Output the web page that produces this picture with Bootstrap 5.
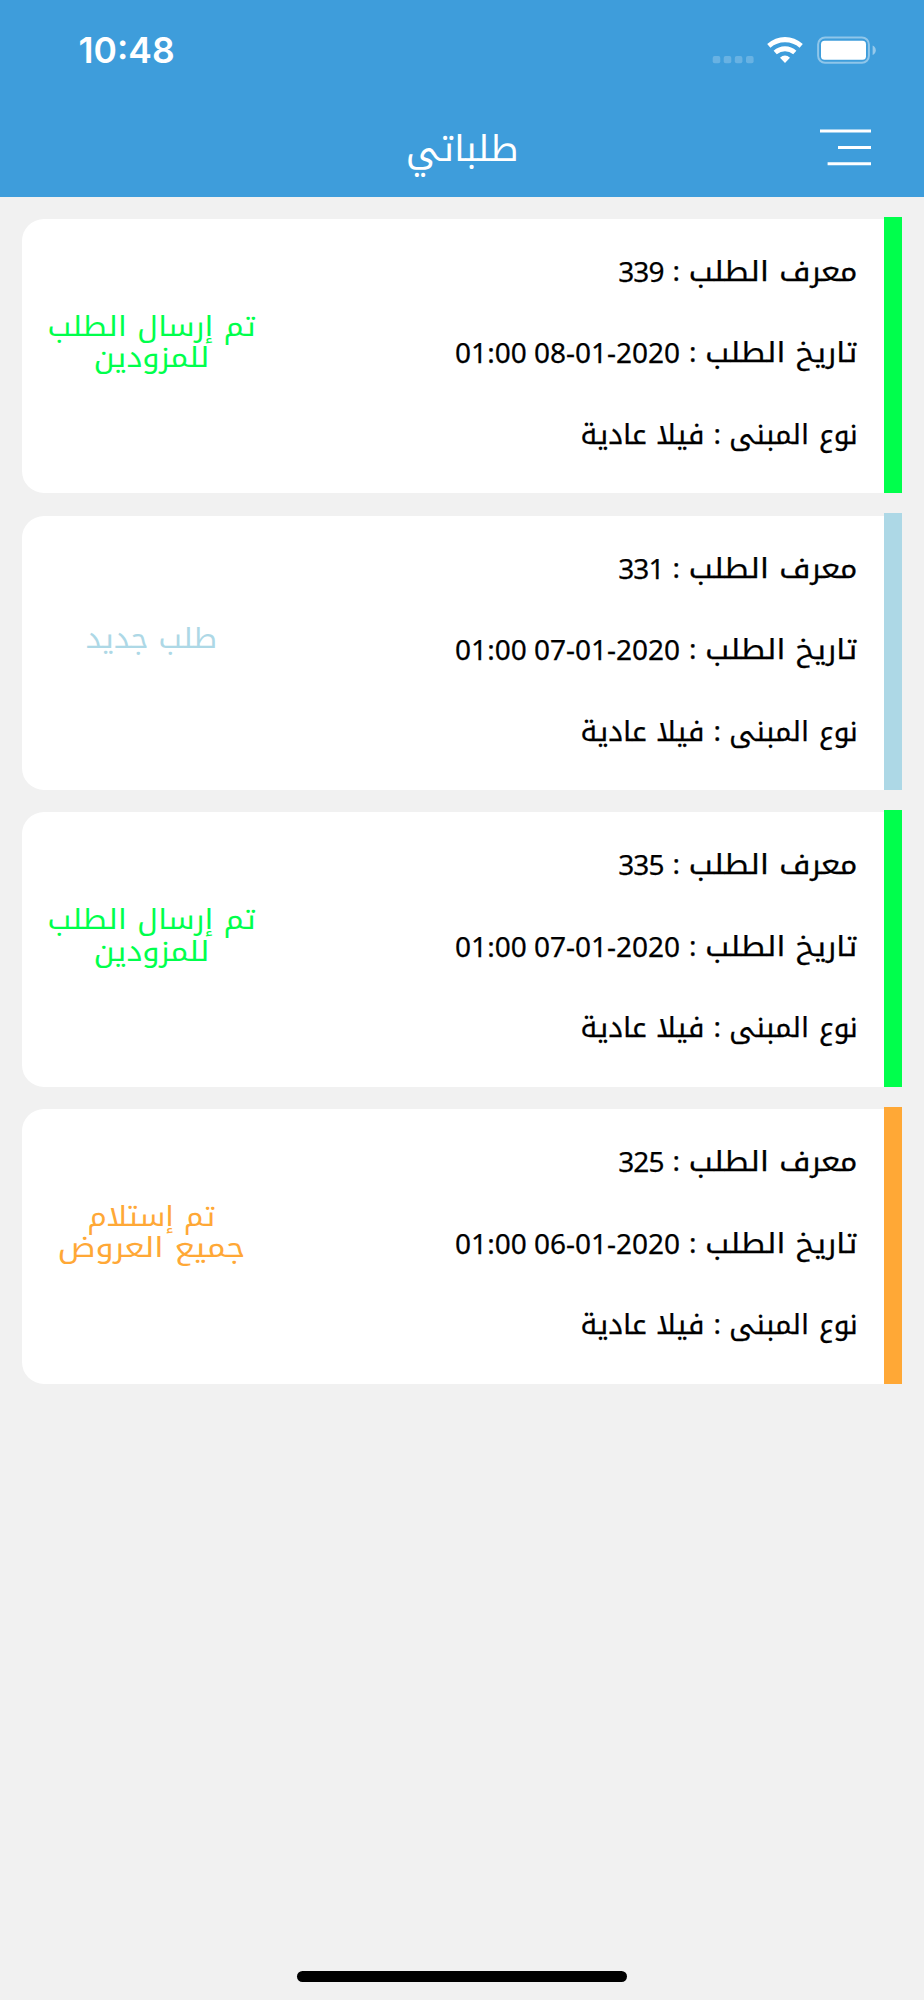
<!DOCTYPE html>
<html lang="ar" dir="rtl">
<head>
<meta charset="utf-8">
<meta name="viewport" content="width=device-width, initial-scale=1">
<title>طلباتي</title>
<link href="https://cdn.jsdelivr.net/npm/bootstrap@5.3.0/dist/css/bootstrap.min.css" rel="stylesheet">
<script src="https://cdn.jsdelivr.net/npm/bootstrap@5.3.0/dist/js/bootstrap.bundle.min.js" defer></script>
<style>
body{background:#f1f1f1;font-family:"Noto Kufi Arabic","Noto Sans","DejaVu Sans",sans-serif;color:#000;height:2000px;overflow:hidden}
.app-head{background:#3e9ddb;height:197px;color:#fff}
.status-row{height:100px;padding:0 48px 0 78.5px}
.clock{font:600 35.5px/1 Inter,sans-serif;padding-top:2px}
.title-row{height:97px}
.page-title{font-size:36px;line-height:60px;font-weight:400}
.menu-btn{right:53px;top:29px;line-height:0}
.orders{padding:19.5px 22.4px 0;gap:20px}
.order{height:276.8px;--tone:#00ff4c}
.order-panel{background:#fff;border-radius:22px 0 0 22px;margin-top:2.4px;padding:0 26px 0 17px}
.order-bar{width:18px;background:var(--tone)}
.facts{margin-top:-6px;-webkit-text-stroke:.25px #000}
.facts>div{height:81.6px;line-height:81.6px;font-size:28px;white-space:nowrap}
.fit{display:inline-block;transform:scaleX(var(--s));transform-origin:right}
.state .fit{transform-origin:center}
.k-id{width:168.5px;--s:1.1}
.k-date{width:152px;--s:1.1}
.k-kind{width:127.5px;--s:1}
.v-kind{--s:1.02}
.sep{width:25.5px;text-align:center}
.num{font-family:"Noto Sans",sans-serif;direction:ltr}
.num-id{letter-spacing:-.9px}
.state{width:224px;color:var(--tone);font-size:28px;line-height:31.3px;margin-bottom:28px}
.tone-new{--tone:#add8e6}
.tone-offers{--tone:#ffa836}
.home-bar{width:330px;height:11px;border-radius:6px;background:#000;margin-bottom:18px}
</style>
</head>
<body class="d-flex flex-column">
<header class="app-head flex-shrink-0">
  <div class="status-row d-flex justify-content-between align-items-center" dir="ltr">
    <span class="clock">10:48</span>
    <svg width="164" height="28" viewBox="0 0 164 28" fill="#fff">
      <g opacity=".22"><rect x=".7" y="20" width="7.6" height="7.3" rx="2"/><rect x="11.7" y="20" width="7.6" height="7.3" rx="2"/><rect x="22.8" y="20" width="7.6" height="7.3" rx="2"/><rect x="34" y="20" width="7.6" height="7.3" rx="2"/></g>
      <path d="M55.2 8.1Q63.2 1 73 1T90.8 8.1L87.6 11.7Q81.5 6.2 73 6.2T58.400 11.700ZM61.600 14.800Q66.500 10.300 73 10.300T84.400 14.800L81.200 18.300Q77.500 15.200 73 15.200T64.800 18.300ZM68 21.700Q70.300 19.600 73 19.600T78 21.700L73 27.100Z"/>
      <rect x="106.100" y="1.400" width="50.800" height="25.400" rx="7" fill="none" stroke="#fff" stroke-width="2" opacity=".42"/>
      <rect x="109" y="4.700" width="45" height="19" rx="3.500"/>
      <path d="M160.600 9.500Q163.800 11 163.800 14.200T160.600 19Z" opacity=".45"/>
    </svg>
  </div>
  <div class="title-row position-relative d-flex justify-content-center align-items-center">
    <h1 class="page-title m-0">طلباتي</h1>
    <button class="menu-btn btn p-0 border-0 position-absolute" aria-label="القائمة"><svg width="51" height="38" viewBox="0 0 51 38" fill="#fff"><path d="M0 .5h51v3H0zM18 16.900h33v3H18zM7.600 33.200h43.400v3H7.600z"/></svg></button>
  </div>
</header>
<main class="orders d-flex flex-column flex-grow-1">
  <article class="order d-flex"><div class="order-bar"></div><div class="order-panel flex-grow-1 d-flex justify-content-between align-items-center">
    <div class="facts">
      <div class="d-flex"><span class="k-id"><span class="fit">معرف الطلب</span></span><span class="sep">:</span><span class="num num-id">339</span></div>
      <div class="d-flex"><span class="k-date"><span class="fit">تاريخ الطلب</span></span><span class="sep">:</span><span class="num">01:00 08-01-2020</span></div>
      <div class="d-flex"><span class="k-kind"><span class="fit">نوع المبنى</span></span><span class="sep">:</span><span class="v-kind fit">فيلا عادية</span></div>
    </div>
    <div class="state text-center"><span class="fit" style="--s:1.09">تم إرسال الطلب</span><br><span class="fit" style="--s:1.1">للمزودين</span></div></div></article>
  <article class="order tone-new d-flex"><div class="order-bar"></div><div class="order-panel flex-grow-1 d-flex justify-content-between align-items-center">
    <div class="facts">
      <div class="d-flex"><span class="k-id"><span class="fit">معرف الطلب</span></span><span class="sep">:</span><span class="num num-id">331</span></div>
      <div class="d-flex"><span class="k-date"><span class="fit">تاريخ الطلب</span></span><span class="sep">:</span><span class="num">01:00 07-01-2020</span></div>
      <div class="d-flex"><span class="k-kind"><span class="fit">نوع المبنى</span></span><span class="sep">:</span><span class="v-kind fit">فيلا عادية</span></div>
    </div>
    <div class="state text-center"><span class="fit" style="--s:1.07">طلب جديد</span></div></div></article>
  <article class="order d-flex"><div class="order-bar"></div><div class="order-panel flex-grow-1 d-flex justify-content-between align-items-center">
    <div class="facts">
      <div class="d-flex"><span class="k-id"><span class="fit">معرف الطلب</span></span><span class="sep">:</span><span class="num num-id">335</span></div>
      <div class="d-flex"><span class="k-date"><span class="fit">تاريخ الطلب</span></span><span class="sep">:</span><span class="num">01:00 07-01-2020</span></div>
      <div class="d-flex"><span class="k-kind"><span class="fit">نوع المبنى</span></span><span class="sep">:</span><span class="v-kind fit">فيلا عادية</span></div>
    </div>
    <div class="state text-center"><span class="fit" style="--s:1.09">تم إرسال الطلب</span><br><span class="fit" style="--s:1.1">للمزودين</span></div></div></article>
  <article class="order tone-offers d-flex"><div class="order-bar"></div><div class="order-panel flex-grow-1 d-flex justify-content-between align-items-center">
    <div class="facts">
      <div class="d-flex"><span class="k-id"><span class="fit">معرف الطلب</span></span><span class="sep">:</span><span class="num num-id">325</span></div>
      <div class="d-flex"><span class="k-date"><span class="fit">تاريخ الطلب</span></span><span class="sep">:</span><span class="num">01:00 06-01-2020</span></div>
      <div class="d-flex"><span class="k-kind"><span class="fit">نوع المبنى</span></span><span class="sep">:</span><span class="v-kind fit">فيلا عادية</span></div>
    </div>
    <div class="state text-center"><span class="fit" style="--s:1.06">تم إستلام</span><br><span class="fit" style="--s:1.15">جميع العروض</span></div></div></article>
</main>
<div class="home-bar align-self-center"></div>
</body>
</html>
